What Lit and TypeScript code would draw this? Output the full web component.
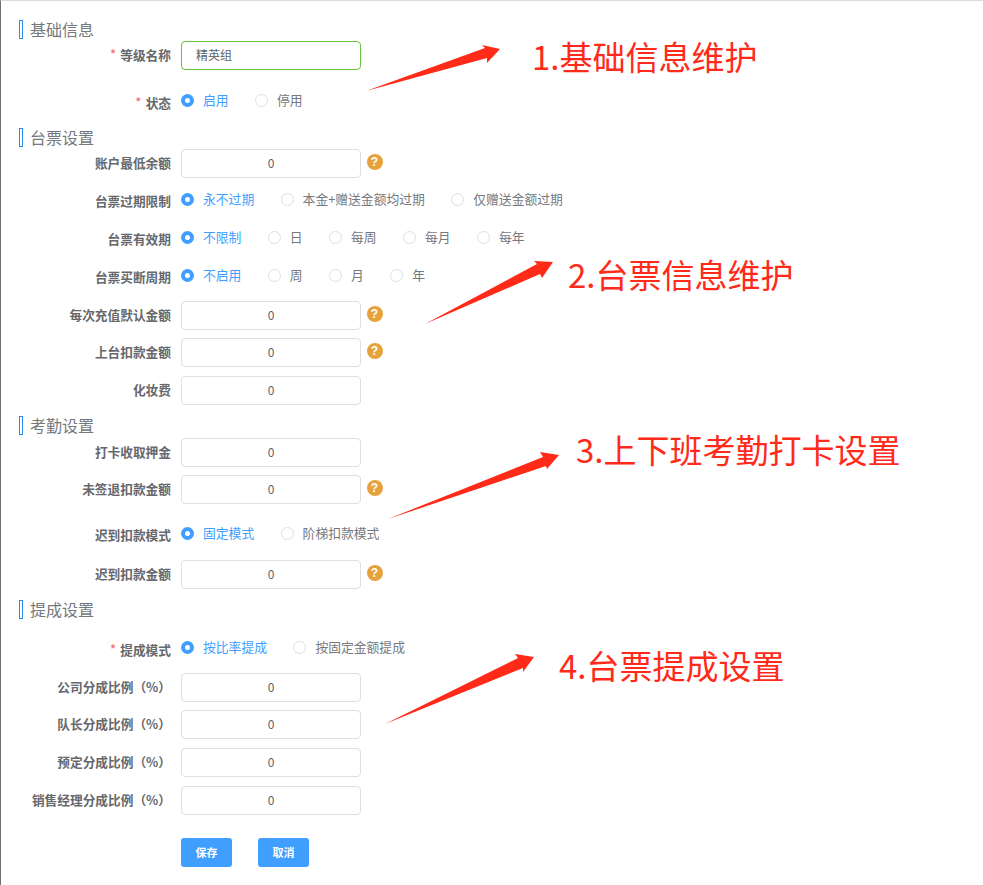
import { LitElement, html, css, svg } from "lit";
import { customElement } from "lit/decorators.js";

type Row =
  | { kind: "title"; text: string; gap: number }
  | { kind: "input"; label: string; gap: number; value?: string; help?: boolean; req?: boolean; ok?: boolean }
  | { kind: "radio"; label: string; gap: number; req?: boolean; options: string[] };

const ROWS: Row[] = [
  { kind: "title", text: "基础信息", gap: 20 },
  { kind: "input", label: "等级名称", req: true, ok: true, value: "精英组", gap: 2 },
  { kind: "radio", label: "状态", req: true, options: ["启用", "停用"], gap: 16 },
  { kind: "title", text: "台票设置", gap: 13 },
  { kind: "input", label: "账户最低余额", help: true, gap: 2 },
  { kind: "radio", label: "台票过期限制", options: ["永不过期", "本金+赠送金额均过期", "仅赠送金额过期"], gap: 7 },
  { kind: "radio", label: "台票有效期", options: ["不限制", "日", "每周", "每月", "每年"], gap: 9 },
  { kind: "radio", label: "台票买断周期", options: ["不启用", "周", "月", "年"], gap: 9 },
  { kind: "input", label: "每次充值默认金额", help: true, gap: 11 },
  { kind: "input", label: "上台扣款金额", help: true, gap: 8 },
  { kind: "input", label: "化妆费", gap: 9 },
  { kind: "title", text: "考勤设置", gap: 11 },
  { kind: "input", label: "打卡收取押金", gap: 3 },
  { kind: "input", label: "未签退扣款金额", help: true, gap: 8 },
  { kind: "radio", label: "迟到扣款模式", options: ["固定模式", "阶梯扣款模式"], gap: 15 },
  { kind: "input", label: "迟到扣款金额", help: true, gap: 12 },
  { kind: "title", text: "提成设置", gap: 11 },
  { kind: "radio", label: "提成模式", req: true, options: ["按比率提成", "按固定金额提成"], gap: 14 },
  { kind: "input", label: "公司分成比例（%）", gap: 11 },
  { kind: "input", label: "队长分成比例（%）", gap: 8 },
  { kind: "input", label: "预定分成比例（%）", gap: 9 },
  { kind: "input", label: "销售经理分成比例（%）", gap: 9 },
];

const ARROWS = [
  "366,91 485,48 482,45 500,49 487,63 487,58",
  "425,324 537,264 534,261 553,262 542,278 540,274",
  "388,519 543,457 540,452 559,455 547,469 546,466",
  "385,724 518,658 515,654 534,657 523,672 523,668",
];

const NOTES = [
  { cls: "n1", text: "1.基础信息维护" },
  { cls: "n2", text: "2.台票信息维护" },
  { cls: "n3", text: "3.上下班考勤打卡设置" },
  { cls: "n4", text: "4.台票提成设置" },
];

@customElement("app-root")
export class AppRoot extends LitElement {
  static styles = css`
    :host {
      display: block;
      position: relative;
      box-sizing: border-box;
      height: 885px;
      overflow: hidden;
      background: #fff;
      border-left: 1px solid #6f6f6f;
      border-top: 1px solid #dcdcdc;
      font-family: "Noto Sans CJK SC", "Liberation Sans", sans-serif;
      color: #606266;
      font-size: 13px;
    }
    .form {
      display: flex;
      flex-direction: column;
      margin-top: -1px;
    }
    .title {
      display: flex;
      align-items: center;
      height: 19px;
      font-size: 16px;
      line-height: 19px;
      color: #75787d;
      padding-left: 18px;
      gap: 7px;
    }
    .mark {
      box-sizing: border-box;
      width: 4px;
      height: 19px;
      border: 1px solid #2d8cf0;
    }
    .row {
      display: grid;
      grid-template-columns: 170px 1fr;
      column-gap: 10px;
      align-items: center;
      height: 29px;
    }
    .label {
      text-align: right;
      font-weight: 700;
      font-size: 12.7px;
      line-height: 18px;
      white-space: nowrap;
      color: #66686c;
      margin-top: -2px;
    }
    .row.r .label {
      margin-top: 0;
      padding-top: 3px;
    }
    .req {
      color: #f56c6c;
      font-weight: 400;
      font-size: 14px;
      margin-right: 4px;
    }
    .ctl {
      display: flex;
      align-items: center;
    }
    input {
      box-sizing: border-box;
      width: 180px;
      height: 29px;
      border: 1px solid #dcdfe6;
      border-radius: 4px;
      background: #fff;
      color: #606266;
      font: 12px "Noto Sans CJK SC", "Liberation Sans", sans-serif;
      text-align: center;
      padding: 0 14px 2px;
      outline: none;
    }
    input.ok {
      border-color: #67c23a;
      text-align: left;
    }
    .help {
      width: 16px;
      height: 16px;
      border-radius: 50%;
      background: #e6a23c;
      color: #fff;
      font: 700 12px/16px "Liberation Sans", sans-serif;
      text-align: center;
      margin: 0 0 4px 5.5px;
    }
    .radios {
      display: flex;
      align-items: center;
      gap: 26.4px;
      margin-top: -1px;
    }
    .radio {
      display: flex;
      align-items: center;
      gap: 9px;
      font-size: 12.8px;
      line-height: 18px;
      color: #75787d;
      white-space: nowrap;
    }
    .radio.on {
      color: #409eff;
    }
    .dot {
      box-sizing: border-box;
      width: 13px;
      height: 13px;
      border-radius: 50%;
      border: 1px solid #dcdfe6;
      background: #fff;
    }
    .on .dot {
      border: 4.5px solid #409eff;
    }
    .btns {
      display: flex;
      gap: 26px;
      margin: 23px 0 0 180px;
    }
    button {
      width: 51px;
      height: 29px;
      border: none;
      border-radius: 3px;
      background: #409eff;
      color: #fff;
      font: 700 11px "Noto Sans CJK SC", "Liberation Sans", sans-serif;
      padding: 0 0 2px;
    }
    svg.arrows {
      position: absolute;
      left: -1px;
      top: -1px;
      width: 983px;
      height: 885px;
      pointer-events: none;
    }
    svg.arrows polygon {
      fill: #ff2a17;
    }
    .note {
      position: absolute;
      font-size: 33px;
      line-height: 40px;
      color: #ff2a1a;
      white-space: nowrap;
    }
    .n1 { left: 531px; top: 35px; }
    .n2 { left: 567px; top: 253px; }
    .n3 { left: 575px; top: 428px; }
    .n4 { left: 558px; top: 644px; }
  `;

  private renderRow(r: Row) {
    const gap = `margin-top:${r.gap}px`;
    if (r.kind === "title") {
      return html`<div class="title" style=${gap}><span class="mark"></span>${r.text}</div>`;
    }
    const label = html`<div class="label">${r.req ? html`<span class="req">*</span>` : ""}${r.label}</div>`;
    if (r.kind === "input") {
      return html`<div class="row" style=${gap}>
        ${label}
        <div class="ctl">
          <input class=${r.ok ? "ok" : ""} .value=${r.value ?? "0"} />
          ${r.help ? html`<span class="help">?</span>` : ""}
        </div>
      </div>`;
    }
    return html`<div class="row r" style=${gap}>
      ${label}
      <div class="radios">
        ${r.options.map(
          (o, i) => html`<span class="radio ${i === 0 ? "on" : ""}"><span class="dot"></span>${o}</span>`
        )}
      </div>
    </div>`;
  }

  render() {
    return html`
      <div class="form">
        ${ROWS.map((r) => this.renderRow(r))}
        <div class="btns"><button>保存</button><button>取消</button></div>
      </div>
      <svg class="arrows" viewBox="0 0 983 885">
        ${ARROWS.map((p) => svg`<polygon points=${p}></polygon>`)}
      </svg>
      ${NOTES.map((n) => html`<div class="note ${n.cls}">${n.text}</div>`)}
    `;
  }
}
